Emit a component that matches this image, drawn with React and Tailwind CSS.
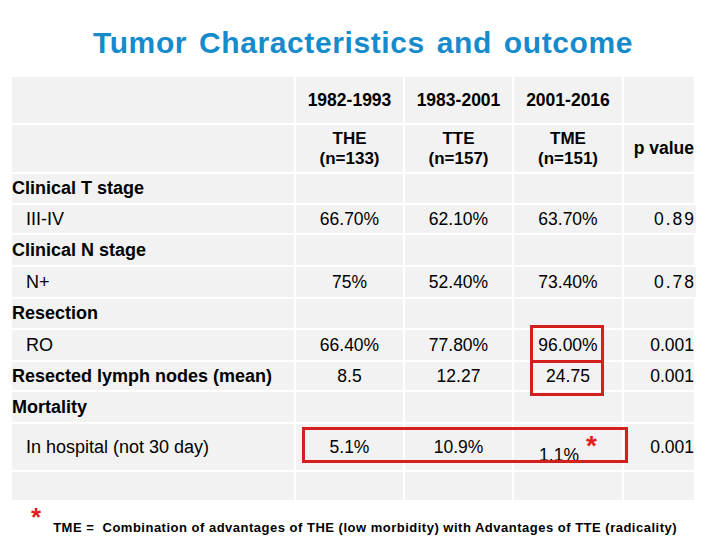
import React from 'react';

const font = { fontFamily: '"Liberation Sans", Arial, sans-serif' };

// row definitions: label, indent, bold label, values, row height
const rows = [
  { h: 'h-[29px]', label: 'Clinical T stage', head: true },
  { h: 'h-[28px]', label: 'III-IV', values: ['66.70%', '62.10%', '63.70%', '0.89'] },
  { h: 'h-[30px]', label: 'Clinical N stage', head: true },
  { h: 'h-[30px]', label: 'N+', values: ['75%', '52.40%', '73.40%', '0.78'] },
  { h: 'h-[29px]', label: 'Resection', head: true },
  { h: 'h-[30px]', label: 'RO', values: ['66.40%', '77.80%', '96.00%', '0.001'] },
  { h: 'h-[28px]', label: 'Resected lymph nodes (mean)', head: true, values: ['8.5', '12.27', '24.75', '0.001'] },
  { h: 'h-[30px]', label: 'Mortality', head: true },
  { h: 'h-[46px]', label: 'In hospital (not 30 day)', values: ['5.1%', '10.9%', 'star', '0.001'] },
  { h: 'h-[28px]', label: '' },
];

const Cell = ({ className = '', children }) => (
  <div className={`bg-[#f2f2f2] flex items-center ${className}`}>{children}</div>
);

export default function App() {
  return (
    <div className="w-[720px] h-[540px] bg-white overflow-hidden relative text-black" style={font}>
      <h1 className="pt-[28px] h-[77px] pl-[6px] text-center text-[30px] font-bold text-[#168bcb] leading-none tracking-[0.6px] [word-spacing:3px] whitespace-nowrap">
        Tumor Characteristics and outcome
      </h1>

      <div className="relative ml-[12px] w-[682px]">
        <div className="grid grid-cols-[282px_107px_107px_108px_70px] gap-[2px]">
          {/* header row 1 */}
          <Cell className="h-[46px]" />
          {['1982-1993', '1983-2001', '2001-2016'].map((t) => (
            <Cell key={t} className="h-[46px] justify-center text-[17.5px] font-bold">{t}</Cell>
          ))}
          <Cell className="h-[46px]" />

          {/* header row 2 */}
          <Cell className="h-[47px]" />
          {[['THE', '(n=133)'], ['TTE', '(n=157)'], ['TME', '(n=151)']].map(([a, b]) => (
            <Cell key={a} className="h-[47px] justify-center text-center text-[17px] font-bold leading-[20px]">
              <div>{a}<br />{b}</div>
            </Cell>
          ))}
          <Cell className="h-[47px] justify-end text-[17.5px] font-bold whitespace-nowrap">p value</Cell>

          {rows.map((r, i) => (
            <React.Fragment key={i}>
              <Cell className={`${r.h} whitespace-nowrap text-[18px] ${r.head ? 'font-bold' : 'pl-[14px]'}`}>
                {r.label}
              </Cell>
              {[0, 1, 2, 3].map((j) => {
                const v = r.values ? r.values[j] : '';
                if (v === 'star') {
                  return (
                    <Cell key={j} className={`${r.h} justify-center text-[17.5px]`}>
                      <span className="pt-[16px]">1.1%</span>
                      <span className="ml-[7px] mb-[2px] text-[28px] font-bold text-[#e01e1e] leading-none">*</span>
                    </Cell>
                  );
                }
                const wide = v === '0.89' || v === '0.78';
                return (
                  <Cell
                    key={j}
                    className={`${r.h} text-[17.5px] ${j === 3 ? 'justify-end' : 'justify-center'} ${wide ? 'tracking-[2px] -mr-[2px]' : ''}`}
                  >
                    {v}
                  </Cell>
                );
              })}
            </React.Fragment>
          ))}
        </div>

        {/* highlight boxes */}
        <div className="absolute left-[518px] top-[248px] w-[74px] h-[71px] border-[3px] border-[#d41f1f]" />
        <div className="absolute left-[518px] top-[283px] w-[74px] h-[3px] bg-[#d41f1f]" />
        <div className="absolute left-[290px] top-[350px] w-[326px] h-[36px] border-[3px] border-[#d41f1f]" />
      </div>

      <div className="flex items-start mt-[4px] pl-[31px]">
        <span className="text-[26px] font-bold text-[#e01e1e] leading-none">*</span>
        <span className="ml-[12px] mt-[14px] text-[13px] font-bold whitespace-nowrap tracking-[0.5px]">
          TME =&nbsp; Combination of advantages of THE (low morbidity) with Advantages of TTE (radicality)
        </span>
      </div>
    </div>
  );
}
